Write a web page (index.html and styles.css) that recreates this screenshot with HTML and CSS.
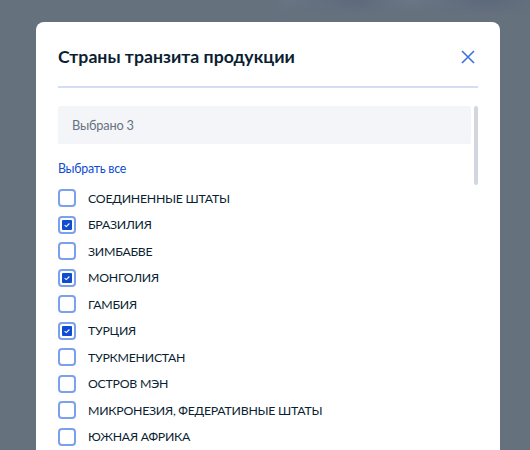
FILE: index.html
```html
<!DOCTYPE html>
<html lang="ru">
<head>
    <meta charset="UTF-8">
    <title>Страны транзита продукции</title>
    <link rel="stylesheet" href="styles.css">
</head>
<body>
    <div class="backdrop"></div>
    <div class="modal">
        <div class="modal-header">
            <h2 class="modal-title">Страны транзита продукции</h2>
            <button class="close-btn" aria-label="Закрыть">
                <svg width="16" height="16" viewBox="0 0 16 16">
                    <path d="M2 2L14 14M14 2L2 14" stroke="#3a6fe6" stroke-width="1.6" fill="none"/>
                </svg>
            </button>
        </div>
        <div class="modal-body">
            <div class="scroll-area">
                <div class="selected-box">Выбрано 3</div>
                <a class="select-all" href="#">Выбрать все</a>
                <ul class="country-list">
                    <li class="country"><span class="check"></span>Соединенные штаты</li>
                    <li class="country"><span class="check checked"></span>Бразилия</li>
                    <li class="country"><span class="check"></span>Зимбабве</li>
                    <li class="country"><span class="check checked"></span>Монголия</li>
                    <li class="country"><span class="check"></span>Гамбия</li>
                    <li class="country"><span class="check checked"></span>Турция</li>
                    <li class="country"><span class="check"></span>Туркменистан</li>
                    <li class="country"><span class="check"></span>Остров Мэн</li>
                    <li class="country"><span class="check"></span>Микронезия, Федеративные Штаты</li>
                    <li class="country"><span class="check"></span>Южная Африка</li>
                </ul>
            </div>
            <div class="scrollbar"><div class="thumb"></div></div>
        </div>
    </div>
</body>
</html>
```

FILE: styles.css
```css
html, body {
    height: 100%;
}
body {
    margin: 0;
    padding-top: 22px;
    box-sizing: border-box;
    background-color: #66717e;
    font-family: Lato, "Noto Sans", sans-serif;
    overflow: hidden;
    position: relative;
}
.backdrop {
    position: absolute;
    top: -10px;
    left: 280px;
    width: 260px;
    height: 18px;
    background: linear-gradient(90deg, #6a7584, #5d6a7d 30%, #6b7685 50%, #5c697c 80%, #66717e);
    filter: blur(4px);
}
.modal {
    position: relative;
    margin-left: 36px;
    width: 464px;
    height: 520px;
    background-color: #ffffff;
    border-radius: 8px;
    padding: 22px 22px 0;
    box-sizing: border-box;
}
.modal-header {
    display: flex;
    align-items: center;
    justify-content: space-between;
    padding-bottom: 16px;
    border-bottom: 2px solid #d3def5;
}
.modal-title {
    margin: 0;
    font-size: 17.7px;
    line-height: 26px;
    font-weight: 700;
    color: #0b1f33;
}
.close-btn {
    border: none;
    background: none;
    padding: 0;
    margin-right: 2px;
    width: 16px;
    height: 16px;
    cursor: pointer;
}
.modal-body {
    display: flex;
    margin-top: 18px;
}
.scroll-area {
    flex: 1;
}
.scrollbar {
    width: 4px;
    margin-left: 3px;
}
.thumb {
    height: 79px;
    background-color: #d2d6de;
    border-radius: 2px;
}
.selected-box {
    height: 38px;
    line-height: 38px;
    padding-left: 14px;
    background-color: #f4f5f8;
    border-radius: 2px;
    font-size: 12.8px;
    letter-spacing: -0.2px;
    color: #66727f;
}
.select-all {
    display: block;
    margin-top: 16px;
    font-size: 12.4px;
    letter-spacing: -0.25px;
    line-height: 18px;
    color: #0d4cd3;
    text-decoration: none;
}
.country-list {
    list-style: none;
    margin: 7px 0 0;
    padding: 0;
}
.country {
    display: flex;
    align-items: center;
    gap: 12px;
    height: 26.5px;
    font-size: 12.3px;
    letter-spacing: -0.25px;
    text-transform: uppercase;
    color: #0b1f33;
}
.check {
    width: 18px;
    height: 18px;
    box-sizing: border-box;
    border: 2px solid #7ba0ef;
    border-radius: 4px;
    padding: 2px;
    flex-shrink: 0;
}
.check.checked::after {
    content: "";
    display: block;
    width: 10px;
    height: 10px;
    border-radius: 1px;
    background-color: #0d4cd3;
    background-image: url("data:image/svg+xml,%3Csvg xmlns='http://www.w3.org/2000/svg' viewBox='0 0 10 10'%3E%3Cpath d='M2.6 5.1L4.3 6.6L7.4 3.5' stroke='white' stroke-width='1.1' fill='none'/%3E%3C/svg%3E");
}
```
